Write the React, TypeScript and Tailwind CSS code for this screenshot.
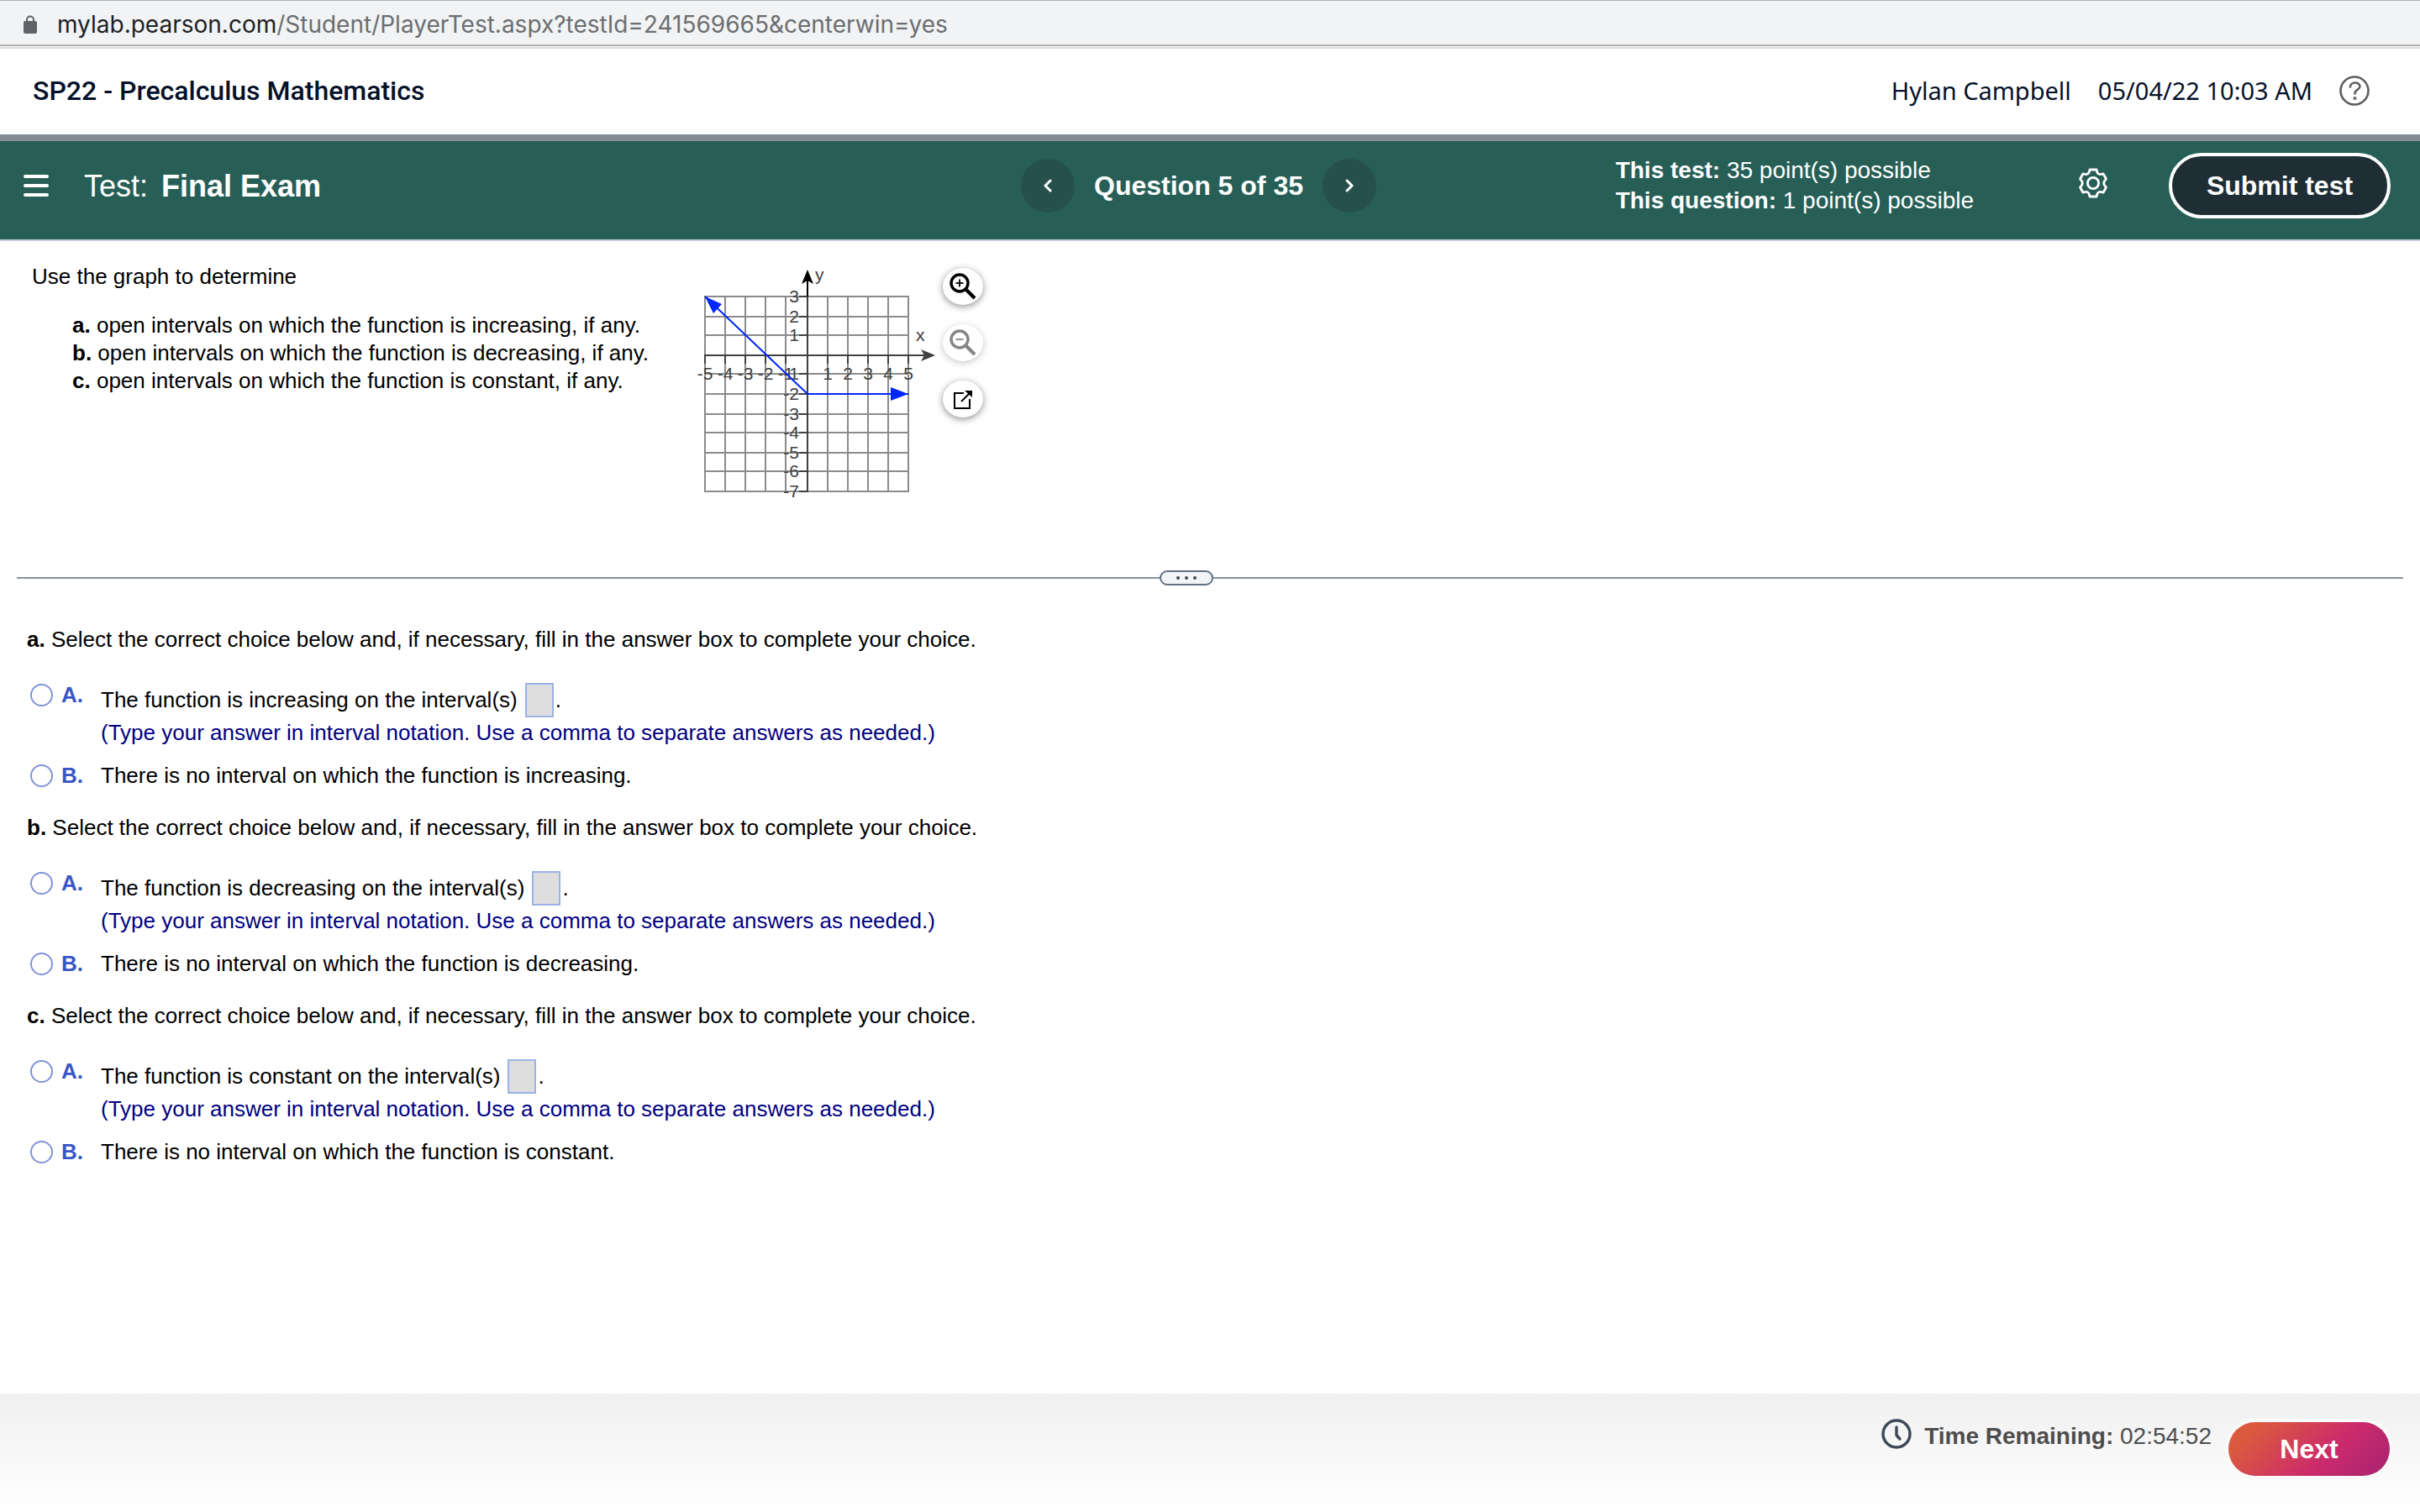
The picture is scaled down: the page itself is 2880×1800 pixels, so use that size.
import React from "react";

const GRID_X = [839, 863, 887, 911, 935, 961, 985, 1009, 1033, 1057, 1081].map((v) => v - 820);
const GRID_Y = [354, 378, 400, 424, 446, 470, 494, 516, 540, 562, 586].map((v) => v - 310);

const FunctionGraph = () => (
  <svg
    width="302"
    height="290"
    viewBox="0 0 302 290"
    role="img"
    aria-label="Graph of a piecewise function"
    className="block shrink-0 font-['Liberation_Sans',sans-serif] text-[21px]"
    fill="#404040"
  >
    <g stroke="#8b8b8b" strokeWidth="2">
      {GRID_X.map((x) => (
        <line key={x} x1={x} y1="44" x2={x} y2="276" />
      ))}
      {GRID_Y.map((y) => (
        <line key={y} x1="18" y1={y} x2="262" y2={y} />
      ))}
    </g>
    <g stroke="#404040" strokeWidth="2">
      <line x1="18" y1="114" x2="280" y2="114" />
      <line x1="141" y1="44" x2="141" y2="277" />
      {GRID_X.map((x) => (
        <line key={x} x1={x} y1="114" x2={x} y2="124" />
      ))}
      {GRID_Y.map((y) => (
        <line key={y} x1="131" y1={y} x2="141" y2={y} />
      ))}
    </g>
    <line x1="141" y1="20" x2="141" y2="44" stroke="#000" strokeWidth="2" />
    <path d="M141 12 L148 29 L141 25 L134 29 Z" fill="#000" />
    <path d="M293 114 L276 121 L280 114 L276 107 Z" />
    {GRID_X.map((x, i) => {
      const n = i - 5;
      return n === 0 ? null : (
        <text key={n} x={x} y="143" textAnchor="middle">
          {n}
        </text>
      );
    })}
    {GRID_Y.map((y, i) => {
      const n = 3 - i;
      return n === 0 ? null : (
        <text key={n} x="131" y={y + 7} textAnchor="end">
          {n}
        </text>
      );
    })}
    <text x="150" y="25">y</text>
    <text x="270" y="97">x</text>
    <g fill="#0026ff" stroke="none">
      <path d="M19 44 L141 160 L261 160" fill="none" stroke="#0026ff" strokeWidth="2" />
      <path d="M19 44 L39 53 L29 64 Z" />
      <path d="M261 160 L240 152 L240 168 Z" />
    </g>
  </svg>
);

const ToolButton = ({ label, disabled, children }: { label: string; disabled?: boolean; children: React.ReactNode }) => (
  <button
    type="button"
    aria-label={label}
    disabled={disabled}
    className="flex h-11 w-12 items-center justify-center rounded-[50%] bg-white shadow-[0_2px_8px_rgba(0,0,0,0.45)] disabled:text-[#858585] disabled:shadow-[0_2px_8px_rgba(0,0,0,0.22)]"
  >
    {children}
  </button>
);

const Magnifier = ({ plus }: { plus?: boolean }) => (
  <svg width="32" height="32" viewBox="0 0 32 32" fill="none" stroke="currentColor">
    <circle cx="12" cy="12" r="10" strokeWidth="3.4" />
    <path d="M7.5 12 H16.5" strokeWidth="1.8" />
    {plus && <path d="M12 7.5 V16.5" strokeWidth="1.8" />}
    <path d="M19.5 19.5 L30 30" strokeWidth="4.2" />
  </svg>
);

const Popout = () => (
  <svg width="24" height="24" viewBox="0 0 24 24" fill="none" stroke="currentColor" strokeWidth="2">
    <path d="M13 5 H2 V23 H20 V12" />
    <path d="M10 15 L19 6" />
    <path d="M14 2 H23 V10 Z" fill="currentColor" stroke="none" />
  </svg>
);

const CHOICES = [
  { id: "a", word: "increasing" },
  { id: "b", word: "decreasing" },
  { id: "c", word: "constant" },
];

const Radio = ({ id, name }: { id: string; name: string }) => (
  <input
    type="radio"
    id={id}
    name={name}
    className="size-[27px] shrink-0 appearance-none rounded-full border-2 border-[#7f93d8] bg-white checked:border-8"
  />
);

const Question = ({ id, word }: { id: string; word: string }) => (
  <fieldset className="h-56">
    <legend className="leading-8">
      <b>{id}.</b> Select the correct choice below and, if necessary, fill in the answer box to complete your choice.
    </legend>
    <div className="flex items-start pt-[34px]">
      <div className="flex h-8 w-[88px] items-center gap-2.5 pl-1">
        <Radio id={`${id}-1`} name={`choice-${id}`} />
        <label htmlFor={`${id}-1`} className="font-bold text-[#3a56c5]">
          A.
        </label>
      </div>
      <div>
        <div className="flex h-11 items-center">
          <label htmlFor={`${id}-answer`}>The function is {word} on the interval(s)</label>
          <input
            id={`${id}-answer`}
            type="text"
            className="ml-[9px] h-[41px] w-[34px] border-2 border-[#9bb2e6] bg-[#dedede] px-1"
          />
          <span className="pl-0.5">.</span>
        </div>
        <p className="leading-[34px] text-[#000082]">
          (Type your answer in interval notation. Use a comma to separate answers as needed.)
        </p>
      </div>
    </div>
    <div className="flex items-center pt-[18px] leading-8">
      <div className="flex w-[88px] items-center gap-2.5 pl-1">
        <Radio id={`${id}-2`} name={`choice-${id}`} />
        <span className="font-bold text-[#3a56c5]">B.</span>
      </div>
      <label htmlFor={`${id}-2`}>There is no interval on which the function is {word}.</label>
    </div>
  </fieldset>
);

export default function App() {
  return (
    <div className="flex min-h-screen flex-col bg-white font-['Liberation_Sans',sans-serif] text-[26px] text-black">
      <div className="flex h-[55px] items-center gap-6 border-t border-b-2 border-t-[#b0b0b0] border-b-[#b0b0b0] bg-[#f1f3f4] pt-1 pl-7 font-[Inter,sans-serif] text-[28px] text-[#6b6e71]">
        <svg width="16" height="22" viewBox="0 0 16 22" className="shrink-0">
          <path d="M4 9 V5.5 a4 4 0 0 1 8 0 V9" fill="none" stroke="#5f6368" strokeWidth="2" />
          <rect x="0" y="7" width="16" height="15" rx="2" fill="#5f6368" />
        </svg>
        <div>
          <span className="text-[#202124]">mylab.pearson.com</span>/Student/PlayerTest.aspx?testId=241569665&amp;centerwin=yes
        </div>
      </div>

      <header className="mt-px flex h-[104px] items-center border-t-2 border-[#dcdcdc] pr-10 pb-0.5 pl-[39px] text-[#05112a]">
        <h1 className="font-[Roboto,sans-serif] text-[32px] font-medium">SP22 - Precalculus Mathematics</h1>
        <div className="ml-auto flex items-center gap-8 pr-5 font-['Noto_Sans',sans-serif] text-[29px]">
          <span>Hylan Campbell</span>
          <span>05/04/22 10:03 AM</span>
          <button type="button" aria-label="Help">
            <svg width="36" height="36" viewBox="0 0 36 36" fill="none" stroke="#5b5f5f" strokeWidth="2.6" strokeLinecap="round">
              <circle cx="18" cy="18" r="16.500" />
              <path d="M13 13.500 C13 7 24.500 7 24.500 13 C24.500 17 18.500 16.500 18.500 21.500" />
              <circle cx="18.500" cy="27" r="0.800" />
            </svg>
          </button>
        </div>
      </header>

      <div className="grid h-[127px] grid-cols-[1fr_auto_1fr] items-center border-t-8 border-b-2 border-t-[#838b95] border-b-[#c7cfda] bg-[#275f57] pr-[35px] pb-3 pl-7 text-white">
        <div className="flex items-center gap-[42px]">
          <button type="button" aria-label="Menu">
            <svg width="30" height="26" viewBox="0 0 30 26" stroke="#fff" strokeWidth="4" strokeLinecap="round">
              <path d="M2 2 H28 M2 13 H28 M2 24 H28" />
            </svg>
          </button>
          <div className="flex items-baseline gap-4 pt-0.5 text-4xl">
            <span>Test:</span>
            <b>Final Exam</b>
          </div>
        </div>
        <div className="flex items-center gap-[23px] pr-5">
          <button type="button" aria-label="Previous question" className="flex size-16 items-center justify-center rounded-full bg-[#26504c]">
            <svg width="12" height="16" viewBox="0 0 12 16" fill="none" stroke="#fff" strokeWidth="3" strokeLinecap="round" strokeLinejoin="round">
              <path d="M9 2 L3 8 L9 14" />
            </svg>
          </button>
          <b className="text-[32px]">Question 5 of 35</b>
          <button type="button" aria-label="Next question" className="flex size-16 items-center justify-center rounded-full bg-[#26504c]">
            <svg width="12" height="16" viewBox="0 0 12 16" fill="none" stroke="#fff" strokeWidth="3" strokeLinecap="round" strokeLinejoin="round">
              <path d="M3 2 L9 8 L3 14" />
            </svg>
          </button>
        </div>
        <div className="flex items-center justify-end">
          <div className="mr-[124px] text-[28px] leading-9">
            <p>
              <b>This test:</b> 35 point(s) possible
            </p>
            <p>
              <b>This question:</b> 1 point(s) possible
            </p>
          </div>
          <button type="button" aria-label="Settings" className="mr-[72px] pb-1.5">
            <svg width="36" height="36" viewBox="0 0 36 36" fill="none" stroke="#fff" strokeWidth="2.8" strokeLinejoin="round">
              <path d="M14 2 H22 L23 5.500 Q24.500 8 27 7.500 L30 6.800 L33.500 13 L31.500 15.500 Q30 18 31.500 20.500 L33.500 23 L30 29.200 L27 28.500 Q24.500 28 23 30.500 L22 34 H14 L13 30.500 Q11.500 28 9 28.500 L6 29.200 L2.500 23 L4.500 20.500 Q6 18 4.500 15.500 L2.500 13 L6 6.800 L9 7.500 Q11.500 8 13 5.500 Z" />
              <circle cx="18" cy="18" r="6.600" />
            </svg>
          </button>
          <button type="button" className="h-[78px] w-[264px] rounded-full border-4 border-white bg-[#1f2d35] text-[32px] font-bold">
            Submit test
          </button>
        </div>
      </div>

      <main>
        <section className="flex h-[392px] items-start pl-[38px]">
          <div className="w-[782px] shrink-0 pt-[26px]">
            <p className="leading-8">Use the graph to determine</p>
            <ul className="pt-[26px] pl-12 leading-[33px]">
              {CHOICES.map((c) => (
                <li key={c.id}>
                  <b>{c.id}.</b> open intervals on which the function is {c.word}, if any.
                </li>
              ))}
            </ul>
          </div>
          <div className="flex items-start pt-[22px]">
            <FunctionGraph />
            <div className="flex flex-col gap-[23px] pt-2.5">
              <ToolButton label="Zoom in">
                <Magnifier plus />
              </ToolButton>
              <ToolButton label="Zoom out" disabled>
                <Magnifier />
              </ToolButton>
              <ToolButton label="Open in new window">
                <Popout />
              </ToolButton>
            </div>
          </div>
        </section>

        <div className="flex items-center px-5">
          <div className="h-0.5 grow-[1360] bg-[#8590a0]" />
          <button
            type="button"
            aria-label="Resize panels"
            className="flex h-[18px] w-16 items-center justify-center gap-1.5 rounded-full border-2 border-[#637082] bg-[#f2f4f5]"
          >
            <span className="size-1 rounded-full bg-[#474747]" />
            <span className="size-1 rounded-full bg-[#474747]" />
            <span className="size-1 rounded-full bg-[#474747]" />
          </button>
          <div className="h-0.5 grow-[1416] bg-[#8590a0]" />
        </div>

        <form className="pt-12 pl-8">
          {CHOICES.map((c) => (
            <Question key={c.id} {...c} />
          ))}
        </form>
      </main>

      <footer className="mt-auto flex h-[141px] items-start justify-end bg-linear-to-b from-[#f0f0f0] to-white pr-9 text-[28px] text-[#4d4d4d]">
        <div className="flex items-start gap-[15px] pt-[30px]">
          <svg width="36" height="36" viewBox="0 0 36 36" fill="none" stroke="#3d4957" strokeWidth="3.4" strokeLinecap="round" strokeLinejoin="round">
            <circle cx="18" cy="18" r="16" />
            <path d="M18 10 V19.500 L22 24" />
          </svg>
          <p>
            <b>Time Remaining:</b> 02:54:52
          </p>
        </div>
        <button
          type="button"
          className="mt-[34px] ml-5 h-16 w-48 rounded-full bg-[linear-gradient(135deg,#db5a3e_15%,#cb2a6c_62%,#ab2570_95%)] text-[32px] font-bold text-white shadow-[0_0_0_4px_#fafafa]"
        >
          Next
        </button>
      </footer>
    </div>
  );
}
